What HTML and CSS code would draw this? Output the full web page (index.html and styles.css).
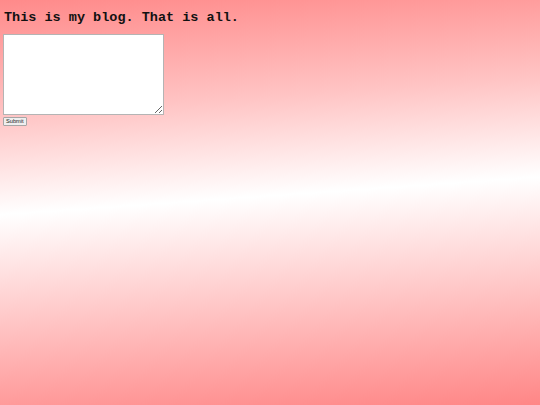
FILE: index.html
```html
<!DOCTYPE html>
<html>
<head>
<meta charset="utf-8">
<link rel="stylesheet" href="styles.css">
</head>
<body>
<h1 class="title">This is my blog. That is all.</h1>
<form class="post">
<textarea class="entry"></textarea>
<button type="button" class="submit">Submit</button>
</form>
</body>
</html>
```
FILE: styles.css
```css
html {
  height: 100%;
}
body {
  margin: 0;
  padding: 4px 3px;
  min-height: 100%;
  box-sizing: border-box;
  background: linear-gradient(176deg, #ff8a8a 0%, #ffc4c4 26%, #ffffff 48.5%, #ffc8c8 72%, #ff8686 100%);
}
.title {
  margin: 6px 0 8px 1px;
  font-family: "Liberation Mono", "Courier New", monospace;
  font-weight: bold;
  font-size: 13.5px;
  line-height: 16px;
  color: #111;
}
.post {
  display: flex;
  flex-direction: column;
  align-items: flex-start;
  gap: 2px;
}
.entry {
  width: 161px;
  height: 81px;
  box-sizing: border-box;
  margin: 0;
  border: 1px solid #b4b4b4;
  background: #fff;
}
.submit {
  font-family: "Liberation Sans", Arial, sans-serif;
  font-size: 5.7px;
  line-height: 7px;
  padding: 0 2px;
  margin: 0;
  border: 1px solid #a6a6a6;
  border-radius: 1px;
  background: #efefef;
  color: #222;
}
```
